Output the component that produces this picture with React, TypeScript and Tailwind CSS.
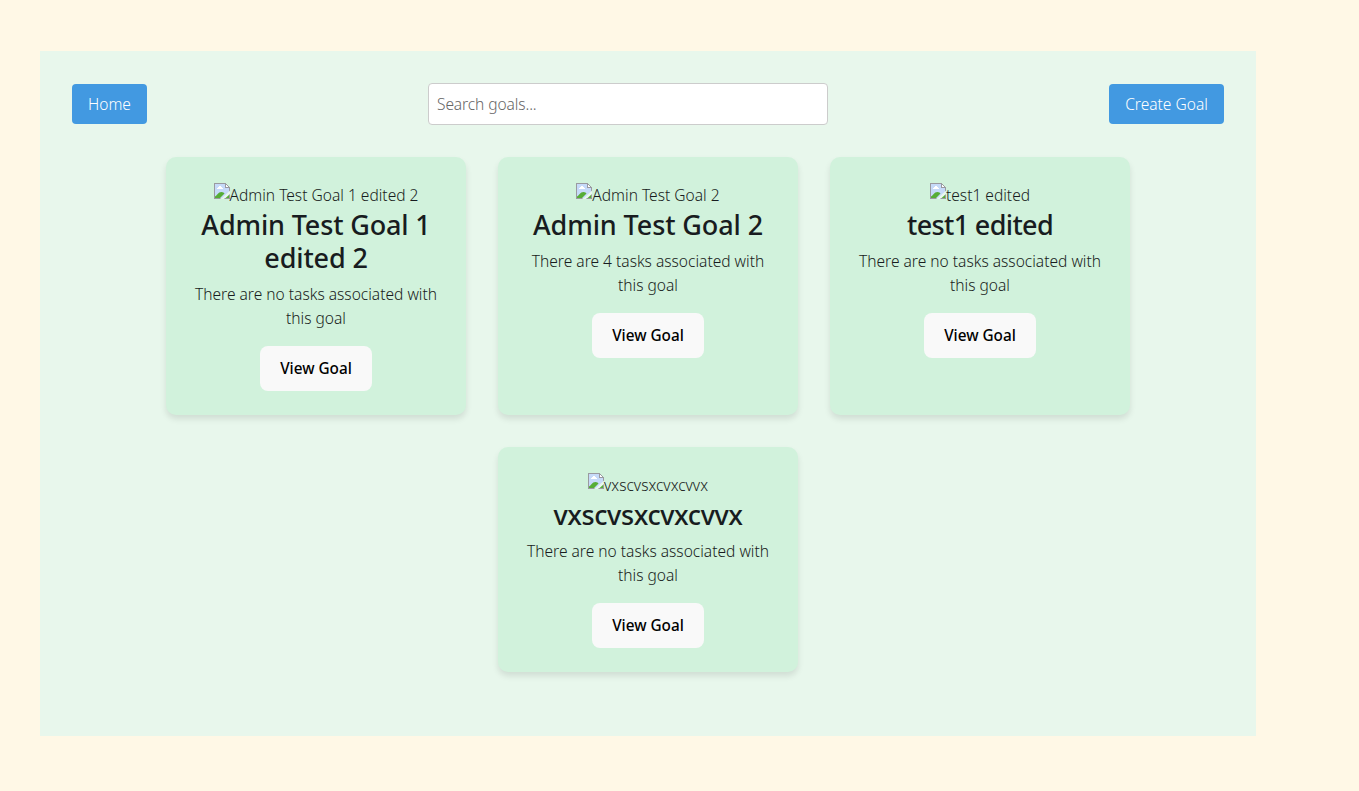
interface Goal {
  name: string;
  tasks: string;
  titleTracking: string;
}

const goals: Goal[] = [
  { name: "Admin Test Goal 1 edited 2", tasks: "no", titleTracking: "tracking-[-0.15px]" },
  { name: "Admin Test Goal 2", tasks: "4", titleTracking: "tracking-[-0.1px]" },
  { name: "test1 edited", tasks: "no", titleTracking: "tracking-[-0.65px]" },
  { name: "vxscvsxcvxcvvx", tasks: "no", titleTracking: "tracking-[-0.4px]" },
];

function MissingImageIcon() {
  return (
    <svg width="16" height="16" viewBox="0 0 16 16" className="block shrink-0">
      <path d="M1 1h10v4h4v10H1z" fill="#c6daf9" />
      <path d="M3 6V5h1V4h1V3h2v1h1v1h1v1z" fill="#fff" />
      <path d="M1 15v-1.5C3 12.5 4 9 7.500 9C9 9 10 9.800 10.500 10.500L6 15z" fill="#56ad36" />
      <path d="M10.500 15L15 11v4z" fill="#56ad36" />
      <path d="M16 7.500L7 16H10.500L16 11z" fill="#e9f8ee" />
      <path d="M11 1h1l3 3v1h-4z" fill="#fff" />
      <path d="M0 0h12v1H1v14h6l-1 1H0zM11 1h1v3h3v1h-4zM12 1h1v1h-1zM13 2h1v1h-1zM14 3h1v1h-1zM15 4h1v3.500l-1 1zM15 12l1-1v5h-6l1-1h4z" fill="#9a9aa0" />
    </svg>
  );
}

function GoalCard({ goal }: { goal: Goal }) {
  return (
    <article className="flex w-[300px] flex-col items-center rounded-[10px] bg-[#d1f2dc] p-6 text-center shadow-[0_4px_6px_rgba(0,0,0,0.1)]">
      <div className="flex h-[27px] items-start pt-0.5">
        <MissingImageIcon />
        <span className="leading-6 whitespace-nowrap">{goal.name}</span>
      </div>
      <h3 className={`mb-2 text-[27px] leading-[33px] font-medium ${goal.titleTracking}`}>{goal.name}</h3>
      <p className="mb-4 leading-6">There are {goal.tasks} tasks associated with this goal</p>
      <button className="h-[45px] w-28 shrink-0 rounded-lg bg-[#f9f9f9] text-[15.3px] font-medium text-black">View Goal</button>
    </article>
  );
}

export default function App() {
  return (
    <div className="min-h-screen bg-[#fff8e6] pt-[51px] pl-10 font-['Noto_Sans',sans-serif] text-[15.55px] font-light text-[#181c20]">
      <main className="h-[685px] w-[1216px] bg-[#e8f7ec] p-8">
        <header className="flex h-[42px] items-center justify-between">
          <button className="h-10 w-[75px] rounded bg-[#4299e1] pt-0.5 text-white">Home</button>
          <input
            type="text"
            placeholder="Search goals..."
            className="h-[42px] w-[400px] rounded border border-[#ccc] bg-white px-2 tracking-[-0.1px] placeholder:text-[#666]"
          />
          <button className="h-10 w-[115px] rounded bg-[#4299e1] pt-0.5 text-white">Create Goal</button>
        </header>
        <section className="mt-8 flex flex-wrap justify-center gap-8 px-20">
          {goals.map((goal) => (
            <GoalCard key={goal.name} goal={goal} />
          ))}
        </section>
      </main>
    </div>
  );
}
